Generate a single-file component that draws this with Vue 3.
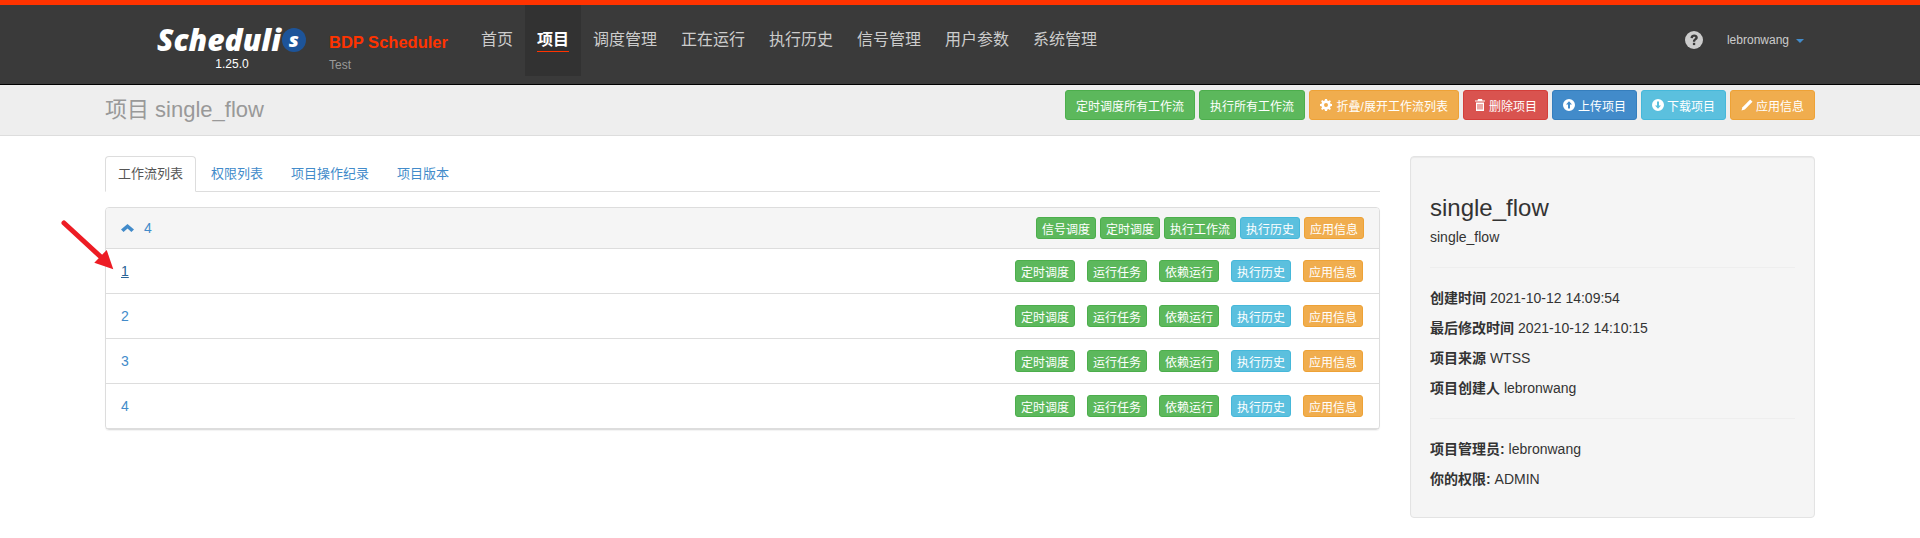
<script setup>
const navItems = ['首页', '项目', '调度管理', '正在运行', '执行历史', '信号管理', '用户参数', '系统管理']
const tabs = ['工作流列表', '权限列表', '项目操作纪录', '项目版本']
const topButtons = [
  { label: '定时调度所有工作流', color: 'green' },
  { label: '执行所有工作流', color: 'green' },
  { label: '折叠/展开工作流列表', color: 'orange', icon: 'gear' },
  { label: '删除项目', color: 'red', icon: 'trash' },
  { label: '上传项目', color: 'blue', icon: 'up' },
  { label: '下载项目', color: 'cyan', icon: 'down' },
  { label: '应用信息', color: 'orange', icon: 'pencil' }
]
const headButtons = [
  { label: '信号调度', color: 'green' },
  { label: '定时调度', color: 'green' },
  { label: '执行工作流', color: 'green' },
  { label: '执行历史', color: 'cyan' },
  { label: '应用信息', color: 'orange' }
]
const rowButtons = [
  { label: '定时调度', color: 'green' },
  { label: '运行任务', color: 'green' },
  { label: '依赖运行', color: 'green' },
  { label: '执行历史', color: 'cyan' },
  { label: '应用信息', color: 'orange' }
]
const flows = ['1', '2', '3', '4']
const details = [
  ['创建时间', '2021-10-12 14:09:54'],
  ['最后修改时间', '2021-10-12 14:10:15'],
  ['项目来源', 'WTSS'],
  ['项目创建人', 'lebronwang']
]
const access = [
  ['项目管理员:', 'lebronwang'],
  ['你的权限:', 'ADMIN']
]
</script>

<template>
  <div class="page">
    <nav class="navbar">
      <div class="brand">
        <div class="logo">
          <span class="logo-text">Scheduli</span>
          <span class="logo-badge">s</span>
        </div>
        <div class="version">1.25.0</div>
      </div>
      <div class="product">
        <div class="product-name">BDP Scheduler</div>
        <div class="product-env">Test</div>
      </div>
      <ul class="nav-list">
        <li v-for="(item, i) in navItems" :key="item" :class="{ active: i === 1 }">
          <span>{{ item }}</span>
        </li>
      </ul>
      <div class="nav-right">
        <svg class="help" viewBox="0 0 18 18">
          <circle cx="9" cy="9" r="9" fill="#ccc" />
          <path d="M5.500 7c0-4.500 7.300-4.500 7.300-.4 0 2.400-2.600 2.400-2.600 4.200H7.900c0-3 2.400-2.900 2.400-4.200 0-1.300-2.400-1.200-2.400.6z" fill="#3a3a3a" />
          <rect x="7.900" y="11.800" width="2.300" height="2.300" fill="#3a3a3a" />
        </svg>
        <span class="user">lebronwang</span>
        <span class="caret"></span>
      </div>
    </nav>

    <header class="page-header">
      <h1>项目 single_flow</h1>
      <div class="top-buttons">
        <button v-for="b in topButtons" :key="b.label" class="btn btn-sm" :class="b.color">
          <svg v-if="b.icon === 'gear'" class="ico wide" viewBox="0 0 12 12">
            <path fill-rule="evenodd" d="M5 0h2l.3 1.600 1.100.5L9.800 1.200l1.100 1.100-.9 1.400.5 1.100L12 5v2l-1.500.3-.5 1.100.9 1.400-1.100 1.100-1.400-.9-1.100.5L7 12H5l-.3-1.500-1.100-.5-1.400.9-1.100-1.100.9-1.400-.5-1.100L0 7V5l1.500-.3.500-1.100-.9-1.400 1.100-1.100 1.400.9 1.100-.5zM6 4a2 2 0 1 0 0 4 2 2 0 0 0 0-4z" fill="#fff" />
          </svg>
          <svg v-else-if="b.icon === 'trash'" class="ico" viewBox="0 0 12 12">
            <path d="M4 0h4l.5 1.500H11v1H1v-1h2.500zM2 3.500h8V12H2zm1.500 1.500v5.500h1V5zm2 0v5.500h1V5zm2 0v5.500h1V5z" fill="#fff" fill-rule="evenodd" />
          </svg>
          <svg v-else-if="b.icon === 'up'" class="ico" viewBox="0 0 12 12">
            <path fill-rule="evenodd" d="M6 0a6 6 0 1 1 0 12A6 6 0 0 1 6 0zm0 2.200L3 5.600h2V9.500h2V5.600h2z" fill="#fff" />
          </svg>
          <svg v-else-if="b.icon === 'down'" class="ico" viewBox="0 0 12 12">
            <path fill-rule="evenodd" d="M6 0a6 6 0 1 1 0 12A6 6 0 0 1 6 0zm0 9.800L9 6.400H7V2.500H5v3.900H3z" fill="#fff" />
          </svg>
          <svg v-else-if="b.icon === 'pencil'" class="ico" viewBox="0 0 12 12">
            <path d="M9.200.5l2.300 2.300-7.700 7.700L.5 11.500l1-3.300z" fill="#fff" />
          </svg>
          {{ b.label }}
        </button>
      </div>
    </header>

    <main class="content">
      <section class="left-col">
        <ul class="tabs">
          <li v-for="(t, i) in tabs" :key="t" :class="{ active: i === 0 }">{{ t }}</li>
        </ul>
        <div class="panel">
          <div class="panel-head">
            <a class="flow-title">
              <svg class="chevron" viewBox="0 0 13 8">
                <path d="M6.500 0l6.500 5.500-2.600 2.500-3.900-3.400L2.600 8 0 5.500z" fill="#428bca" />
              </svg>
              4
            </a>
            <div class="actions tight">
              <button v-for="b in headButtons" :key="b.label" class="btn btn-xs" :class="b.color">{{ b.label }}</button>
            </div>
          </div>
          <div v-for="(f, i) in flows" :key="f" class="panel-row">
            <a class="flow-link" :class="{ hover: i === 0 }">{{ f }}</a>
            <div class="actions">
              <button v-for="b in rowButtons" :key="b.label" class="btn btn-xs" :class="b.color">{{ b.label }}</button>
            </div>
          </div>
        </div>
      </section>

      <aside class="well">
        <h3>single_flow</h3>
        <p class="subtitle">single_flow</p>
        <hr />
        <p v-for="d in details" :key="d[0]" class="info"><strong>{{ d[0] }}</strong> {{ d[1] }}</p>
        <hr class="second" />
        <p v-for="d in access" :key="d[0]" class="info"><strong>{{ d[0] }}</strong> {{ d[1] }}</p>
      </aside>
    </main>

    <svg class="arrow" viewBox="0 0 60 56" width="60" height="56">
      <path d="M4 5L42 40" stroke="#ed1c24" stroke-width="5" stroke-linecap="round" />
      <path d="M53.300 51.300L34.300 44.700 46.700 32z" fill="#ed1c24" />
    </svg>
  </div>
</template>

<style>
html,
body {
  margin: 0;
  background: #fff;
}
</style>

<style scoped>
.page {
  position: relative;
  height: 538px;
  overflow: hidden;
  font-family: "Liberation Sans", "Noto Sans CJK SC", sans-serif;
  font-size: 14px;
  line-height: 20px;
  color: #333;
}

.navbar {
  display: flex;
  box-sizing: border-box;
  height: 85px;
  padding-left: 157px;
  background: #3a3a3a;
  border-top: 5px solid #ff3300;
  border-bottom: 1px solid #000;
}

.brand {
  width: 172px;
  padding-top: 20px;
}

.logo {
  display: flex;
  align-items: center;
  height: 30px;
}

.logo-text {
  font-family: "Open Sans", sans-serif;
  font-size: 30px;
  font-weight: 800;
  font-style: italic;
  color: #fff;
}

.logo-badge {
  display: flex;
  justify-content: center;
  align-items: center;
  width: 24px;
  height: 24px;
  margin-left: 1px;
  border-radius: 50%;
  background: #1d5499;
  font-family: "Open Sans", sans-serif;
  font-size: 20px;
  font-weight: 800;
  font-style: italic;
  line-height: 1;
  color: #fff;
}

.version {
  width: 150px;
  margin-top: 2px;
  font-size: 12px;
  line-height: 14px;
  text-align: center;
  color: #fff;
}

.product {
  width: 140px;
  padding-top: 26px;
}

.product-name {
  font-size: 16.5px;
  font-weight: 700;
  line-height: 22px;
  color: #ff3300;
}

.product-env {
  margin-top: 4px;
  font-size: 12px;
  line-height: 16px;
  color: #999;
}

.nav-list {
  display: flex;
  align-items: flex-start;
  margin: 0;
  padding: 0;
  list-style: none;
}

.nav-list li {
  box-sizing: border-box;
  height: 71px;
  padding: 24px 12px 0;
  font-size: 16px;
  line-height: 21px;
  color: #ccc;
}

.nav-list li span {
  display: inline-block;
  padding-bottom: 1px;
}

.nav-list li.active {
  background: #323232;
  color: #fff;
  font-weight: 700;
}

.nav-list li.active span {
  border-bottom: 1px solid #ff3300;
}

.nav-right {
  display: flex;
  align-items: center;
  height: 70px;
  margin-left: auto;
  padding-right: 116px;
}

.help {
  width: 18px;
  height: 18px;
  margin-right: 24px;
}

.user {
  font-size: 12px;
  color: #ccc;
}

.caret {
  margin: 2px 0 0 7px;
  border-top: 4px solid #428bca;
  border-left: 4px solid transparent;
  border-right: 4px solid transparent;
}

.page-header {
  display: flex;
  justify-content: space-between;
  box-sizing: border-box;
  height: 51px;
  padding: 5px 105px 0;
  background: #eee;
  border-bottom: 1px solid #ddd;
}

.page-header h1 {
  margin: 0;
  padding-top: 6px;
  font-size: 22px;
  font-weight: 400;
  line-height: 28px;
  color: #999;
}

.top-buttons {
  display: flex;
  gap: 4px;
  align-items: flex-start;
}

.btn {
  box-sizing: border-box;
  display: flex;
  justify-content: center;
  align-items: center;
  border: 1px solid;
  border-radius: 3px;
  font-family: inherit;
  color: #fff;
  white-space: nowrap;
}

.btn-sm {
  height: 30px;
  padding: 0 10px;
  font-size: 12px;
}

.btn-xs {
  height: 22px;
  padding: 0 5px;
  font-size: 12px;
}

.ico {
  width: 12px;
  height: 12px;
  margin-right: 3px;
}

.ico.wide {
  margin-right: 4.700px;
}

.green {
  background: #5cb85c;
  border-color: #4cae4c;
}

.orange {
  background: #f0ad4e;
  border-color: #eea236;
}

.red {
  background: #d9534f;
  border-color: #d43f3a;
}

.blue {
  background: #428bca;
  border-color: #357ebd;
}

.cyan {
  background: #5bc0de;
  border-color: #46b8da;
}

.content {
  display: flex;
  justify-content: space-between;
  padding: 20px 105px 0;
}

.left-col {
  width: 1275px;
}

.tabs {
  display: flex;
  height: 36px;
  margin: 0 0 15px;
  padding: 0;
  list-style: none;
  border-bottom: 1px solid #ddd;
  box-sizing: border-box;
  font-size: 13px;
  color: #428bca;
}

.tabs li {
  box-sizing: border-box;
  height: 36px;
  margin-right: 2px;
  padding: 7px 12px;
  border: 1px solid transparent;
  border-radius: 4px 4px 0 0;
}

.tabs li.active {
  background: #fff;
  border-color: #ddd #ddd #fff;
  color: #555;
}

.panel {
  border: 1px solid #ddd;
  border-radius: 4px;
  box-shadow: 0 1px 1px rgba(0, 0, 0, 0.05);
}

.panel-head,
.panel-row {
  display: flex;
  justify-content: space-between;
  align-items: center;
  box-sizing: border-box;
  padding: 0 15px;
}

.panel-head {
  height: 41px;
  background: #f5f5f5;
  border-bottom: 1px solid #ddd;
  border-radius: 3px 3px 0 0;
}

.panel-row {
  height: 45px;
  padding-right: 16px;
  border-bottom: 1px solid #ddd;
}

.flow-title,
.flow-link {
  font-size: 14px;
  color: #428bca;
}

.flow-title {
  display: flex;
  align-items: center;
}

.chevron {
  width: 13px;
  height: 8px;
  margin-right: 10px;
}

.flow-link.hover {
  color: #2a6496;
  text-decoration: underline;
}

.actions {
  display: flex;
  gap: 12px;
}

.actions.tight {
  gap: 4px;
}

.well {
  box-sizing: border-box;
  width: 405px;
  height: 362px;
  padding: 19px;
  background: #f5f5f5;
  border: 1px solid #e3e3e3;
  border-radius: 4px;
  box-shadow: inset 0 1px 1px rgba(0, 0, 0, 0.05);
}

.well h3 {
  margin: 19px 0 6px;
  font-size: 24px;
  font-weight: 500;
  line-height: 26px;
}

.subtitle {
  margin: 0;
}

.well hr {
  margin: 20px 0;
  border: 0;
  border-top: 1px solid #eee;
}

.info {
  margin: 0 0 10px;
}

.arrow {
  position: absolute;
  left: 60px;
  top: 218px;
}
</style>
